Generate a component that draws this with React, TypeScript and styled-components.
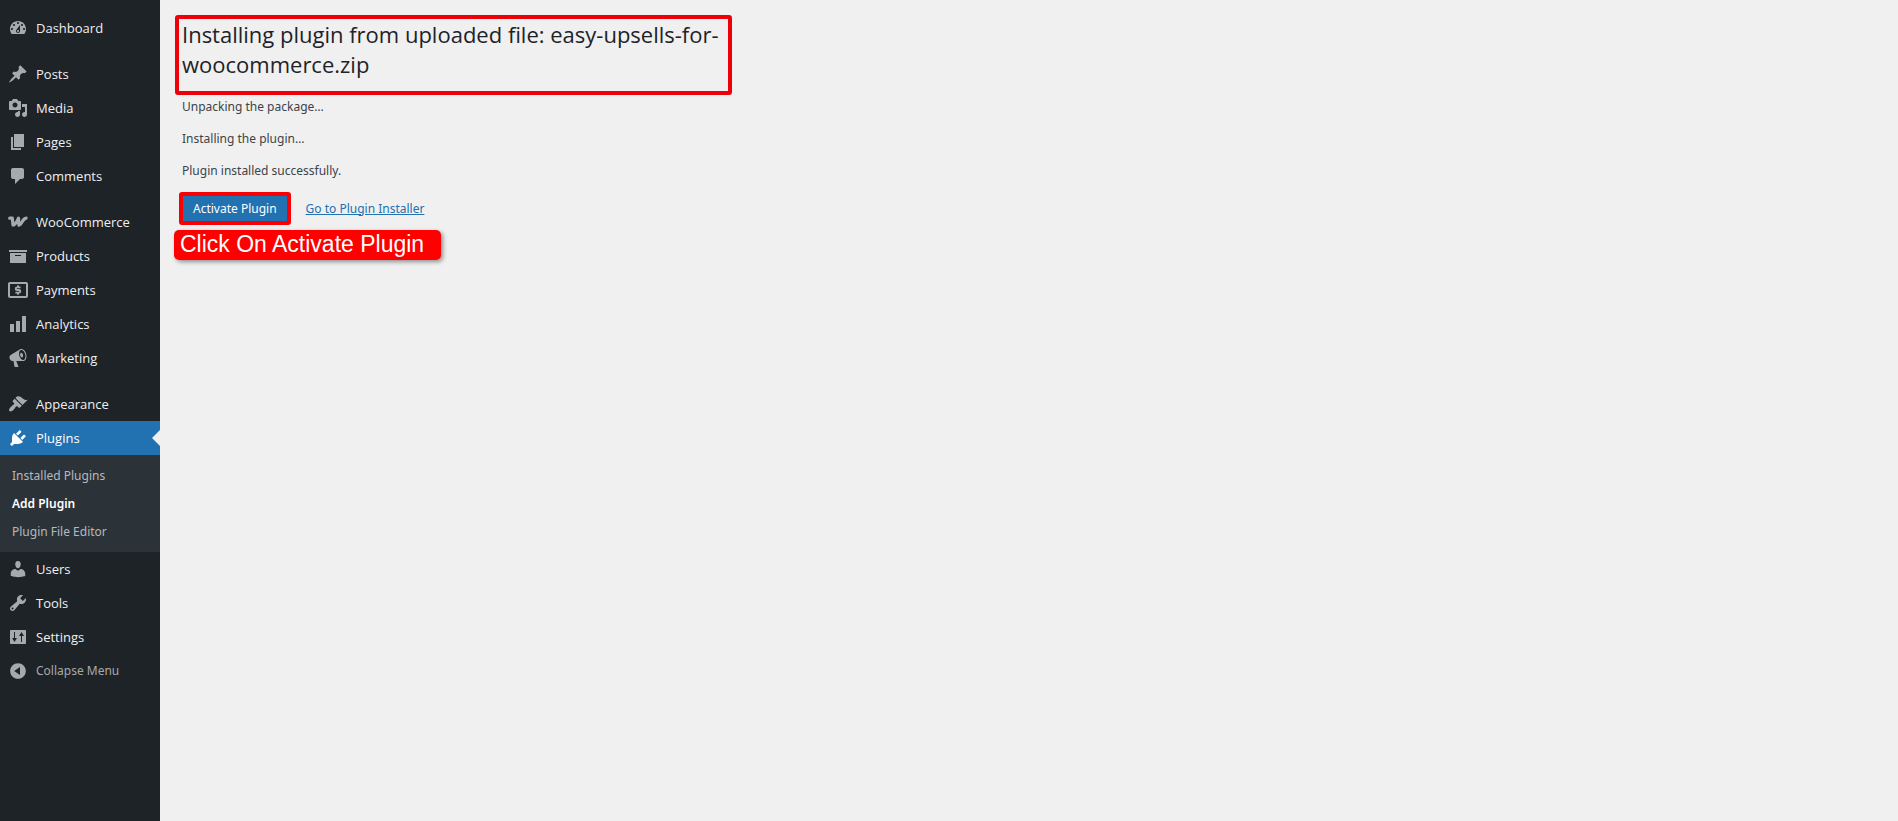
import React from "react";
import styled, { createGlobalStyle, css } from "styled-components";

const GlobalStyle = createGlobalStyle`
  *, *::before, *::after { box-sizing: border-box; }
  body {
    margin: 0;
    background: #f0f0f1;
    color: #3c434a;
    font-family: "Noto Sans", "Open Sans", sans-serif;
    font-size: 12px;
    line-height: 18px;
  }
`;

const Layout = styled.div`
  display: flex;
  align-items: stretch;
  min-height: 100vh;
`;

const Sidebar = styled.nav`
  flex: 0 0 160px;
  padding-top: 11px;
  background: #1d2327;
`;

const MenuList = styled.ul`
  margin: 0;
  padding: 0;
  list-style: none;
`;

const MenuItem = styled.li<{ $spaced?: boolean }>`
  margin-top: ${(p) => (p.$spaced ? "12px" : "0")};
`;

const rowStyle = css`
  position: relative;
  display: flex;
  align-items: center;
  width: 100%;
  height: 34px;
  padding: 0 0 0 8px;
  gap: 8px;
  border: 0;
  font: inherit;
  text-align: left;
  text-decoration: none;
  cursor: pointer;
`;

const MenuLink = styled.a<{ $current?: boolean }>`
  ${rowStyle}
  color: ${(p) => (p.$current ? "#fff" : "#f0f0f1")};
  background: ${(p) => (p.$current ? "#2271b1" : "transparent")};
  font-family: "Open Sans", "Noto Sans", sans-serif;
  font-size: 13px;

  svg {
    color: ${(p) => (p.$current ? "#fff" : "#a7aaad")};
  }

  &::after {
    content: "";
    display: ${(p) => (p.$current ? "block" : "none")};
    position: absolute;
    top: 9px;
    right: 0;
    border: 8px solid transparent;
    border-left-width: 0;
    border-right-color: #f0f0f1;
  }
`;

const CollapseButton = styled.button`
  ${rowStyle}
  background: transparent;
  color: #a7aaad;
`;

const Icon = styled.svg`
  flex: none;
  width: 20px;
  height: 20px;
  fill: currentColor;
`;

const SubMenu = styled.ul`
  margin: 0;
  padding: 7px 0 6px;
  list-style: none;
  background: #2c3338;
`;

const SubLink = styled.a<{ $current?: boolean }>`
  display: block;
  padding: 5px 12px;
  color: ${(p) => (p.$current ? "#fff" : "#b4b9be")};
  font-weight: ${(p) => (p.$current ? 600 : 400)};
  text-decoration: none;
`;

const Main = styled.main`
  flex: 1;
  min-width: 0;
  padding: 15px 14px;
`;

const Title = styled.h1`
  max-width: 557px;
  margin: 0 0 3px 1px;
  padding: 0 3px 12px;
  border: 4px solid #ee0008;
  border-radius: 3px;
  color: #1d2327;
  font-family: "Open Sans", "Noto Sans", sans-serif;
  font-size: 22px;
  font-weight: 400;
  line-height: 30px;
`;

const Message = styled.p`
  margin: 0 0 14px;
  padding-left: 8px;
`;

const Actions = styled.div`
  display: flex;
  align-items: center;
  gap: 15px;
  margin: -2px 0 5px 5px;
`;

const Activate = styled.button`
  height: 33px;
  padding: 0 10px;
  border: 4px solid #fa0005;
  border-radius: 3px;
  background: #2271b1;
  color: #fff;
  font: inherit;
  white-space: nowrap;
  cursor: pointer;
`;

const InstallerLink = styled.a`
  color: #2271b1;
`;

const Callout = styled.div`
  width: fit-content;
  padding: 0 17px 2px 6px;
  border-radius: 5px;
  background: #fe0000;
  box-shadow: 2px 2px 4px rgba(0, 0, 0, 0.4);
  color: #fff;
  font-family: "Liberation Sans", Arial, sans-serif;
  font-size: 23px;
  line-height: 28px;
`;

const paths: Record<string, string> = {
  dashboard:
    "M3.76 16h12.48C17.34 14.63 18 12.89 18 11c0-4.42-3.58-8-8-8s-8 3.58-8 8c0 1.89.66 3.63 1.76 5zM10 4c.55 0 1 .45 1 1s-.45 1-1 1-1-.45-1-1 .45-1 1-1zM6 6c.55 0 1 .45 1 1s-.45 1-1 1-1-.45-1-1 .45-1 1-1zm8 0c.55 0 1 .45 1 1s-.45 1-1 1-1-.45-1-1 .45-1 1-1zm-5.37 5.55L12 7v6c0 1.1-.9 2-2 2s-2-.9-2-2c0-.57.24-1.08.63-1.45zM4 10c.55 0 1 .45 1 1s-.45 1-1 1-1-.45-1-1 .45-1 1-1zm12 0c.55 0 1 .45 1 1s-.45 1-1 1-1-.45-1-1 .45-1 1-1zm-5 3c0-.55-.45-1-1-1s-1 .45-1 1 .45 1 1 1 1-.45 1-1z",
  posts:
    "M10.44 3.02l1.82-1.82 6.36 6.35-1.83 1.82c-1.05-.68-2.48-.57-3.41.36l-.75.75c-.92.93-1.04 2.35-.35 3.41l-1.83 1.82-2.41-2.41-2.8 2.79c-.42.42-3.38 2.71-3.8 2.29s1.86-3.39 2.28-3.81l2.79-2.79L4.1 9.36l1.83-1.82c1.05.69 2.48.57 3.4-.36l.75-.75c.93-.92 1.05-2.35.36-3.41z",
  media:
    "M13 11V4c0-.55-.45-1-1-1h-1.67L9 1H5L3.67 3H2c-.55 0-1 .45-1 1v7c0 .55.45 1 1 1h10c.55 0 1-.45 1-1zM7 4.5c1.38 0 2.5 1.12 2.5 2.5S8.38 9.5 7 9.5 4.5 8.38 4.5 7 5.62 4.5 7 4.5zM14 6h5v10.5c0 1.38-1.12 2.5-2.5 2.5S14 17.88 14 16.5s1.12-2.5 2.5-2.5c.17 0 .34.02.5.05V9h-3V6zm-4 8.05V13h2v3.5c0 1.38-1.12 2.5-2.5 2.5S7 17.88 7 16.5 8.12 14 9.5 14c.17 0 .34.02.5.05z",
  pages: "M6 15V2h10v13H6zm-1 1h8v2H3V5h2v11z",
  comments:
    "M5 2h9c1.1 0 2 .9 2 2v7c0 1.1-.9 2-2 2h-2l-5 5v-5H5c-1.1 0-2-.9-2-2V4c0-1.1.9-2 2-2z",
  products: "M19 4v2H1V4h18zM2 7h16v10H2V7zm11 3V9H7v1h6z",
  analytics: "M18 18V2h-4v16h4zm-6 0V7H8v11h4zm-6 0v-8H2v8h4z",
  marketing:
    "M18.15 5.94c.46 1.62.38 3.22-.02 4.48-.42 1.28-1.26 2.18-2.3 2.48-.16.06-.26.06-.4.06-.06.02-.12.02-.18.02-.06.02-.14.02-.22.02h-6.8l2.22 5.5c.02.14-.06.26-.14.34-.08.1-.24.16-.34.16H6.95c-.1 0-.26-.06-.34-.16-.08-.08-.16-.2-.14-.34l-1-5.5H4.25l-.02-.02c-.5.06-1.08-.18-1.54-.62s-.88-1.08-1.06-1.88c-.24-.8-.2-1.56-.02-2.2.18-.62.58-1.08 1.06-1.3l.02-.02 9-5.4c.1-.06.18-.1.24-.16.06-.04.14-.08.24-.12.16-.08.28-.12.5-.18 1.04-.3 2.24.1 3.22.98s1.84 2.24 2.26 3.86zm-2.58 5.98h-.02c.4-.1.74-.34 1.04-.7.58-.7.86-1.76.86-3.04 0-.64-.1-1.3-.28-1.98-.34-1.36-1.02-2.5-1.78-3.24s-1.68-1.1-2.46-.88c-.82.22-1.4.96-1.7 2-.32 1.04-.28 2.36.06 3.72.38 1.36 1 2.5 1.8 3.24.78.74 1.62 1.1 2.48.88zm-2.54-7.08c.22-.04.42-.02.62.04.38.16.76.48 1.02 1s.42 1.2.42 1.78c0 .3-.04.56-.12.8-.18.48-.44.84-.86.94-.34.1-.8-.06-1.14-.4s-.64-.86-.78-1.5c-.18-.62-.12-1.24.02-1.72s.48-.84.82-.94z",
  appearance:
    "M14.48 11.06L7.41 3.99l1.5-1.5c.5-.56 2.3-.47 3.51.32 1.21.8 1.43 1.28 2.91 2.1 1.18.64 2.45 1.26 4.45.85zm-.71.71L6.7 4.7 4.93 6.47c-.39.39-.39 1.02 0 1.41l1.06 1.06c.39.39.39 1.03 0 1.42-.6.6-1.43 1.11-2.21 1.69-.35.26-.7.53-1.01.84C1.43 14.23.4 16.08 1.4 17.07c.99 1 2.84-.03 4.18-1.36.31-.31.58-.66.85-1.02.57-.78 1.08-1.61 1.69-2.21.39-.39 1.02-.39 1.41 0l1.06 1.06c.39.39 1.02.39 1.41 0z",
  plugins:
    "M13.11 4.36L9.87 7.6 8 5.73l3.24-3.24c.35-.34 1.05-.2 1.56.32.52.51.66 1.21.31 1.55zm-8 1.77l.91-1.12 9.01 9.01-1.19.84c-.71.71-2.63 1.16-3.82 1.16H6.14L4.9 17.26c-.59.59-1.54.59-2.12 0-.59-.58-.59-1.53 0-2.12l1.24-1.24v-3.88c0-1.13.4-3.19 1.09-3.89zm7.26 3.97l3.24-3.24c.34-.35 1.04-.21 1.55.31.52.51.66 1.21.31 1.55l-3.24 3.25z",
  users:
    "M10 9.25c-2.27 0-2.73-3.44-2.73-3.44C7 4.02 7.82 2 9.97 2c2.16 0 2.98 2.02 2.71 3.81 0 0-.41 3.44-2.68 3.44zm0 2.57L12.72 10c2.39 0 4.52 2.33 4.52 4.53v2.49s-3.65 1.13-7.24 1.13c-3.65 0-7.24-1.13-7.24-1.13v-2.49c0-2.25 1.94-4.48 4.47-4.48z",
  tools:
    "M16.68 9.77c-1.34 1.34-3.3 1.67-4.95.99l-5.41 6.52c-.99.99-2.59.99-3.58 0s-.99-2.59 0-3.57l6.52-5.42c-.68-1.65-.35-3.61.99-4.95 1.28-1.28 3.12-1.62 4.72-1.06l-2.89 2.89 2.82 2.82 2.86-2.87c.53 1.58.18 3.39-1.08 4.65zM3.81 16.21c.4.39 1.04.39 1.43 0 .4-.4.4-1.04 0-1.43-.39-.4-1.03-.4-1.43 0-.39.39-.39 1.03 0 1.43z",
  settings:
    "M3 3h14c.55 0 1 .45 1 1v12c0 .55-.45 1-1 1H3c-.55 0-1-.45-1-1V4c0-.55.45-1 1-1zM6 5v6H4l2.5 4L9 11H7V5zM13 15h1V9h2l-2.5-4L11 9h2z",
  collapse:
    "M10 2.16c4.33 0 7.84 3.51 7.84 7.84s-3.51 7.84-7.84 7.84S2.16 14.33 2.16 10 5.71 2.16 10 2.16zm2 11.72V6.12L6.18 9.97z",
};

function MenuIcon({ name }: { name: string }) {
  if (name === "woocommerce") {
    return (
      <Icon viewBox="0 0 20 20" aria-hidden="true">
        <path
          fill="none"
          stroke="currentColor"
          strokeWidth="3.2"
          strokeLinecap="round"
          strokeLinejoin="round"
          d="M1.7 6.2h2.6L5 13.2c2 0 3.9-3.400 5.500-7L10.900 13.200c2.500 0 3.600-6.600 7.200-7"
        />
      </Icon>
    );
  }
  if (name === "payments") {
    return (
      <Icon viewBox="0 0 20 20" aria-hidden="true">
        <g fill="none" stroke="currentColor">
          <rect x="1" y="3" width="18" height="14" rx="1" strokeWidth="2" />
          <path
            strokeWidth="1.8"
            d="M12.6 7.4H9.100c-1.900 0-1.900 2.600 0 2.600h1.800c1.900 0 1.900 2.600 0 2.600H7.400M10 5.200v2M10 12.800v2"
          />
        </g>
      </Icon>
    );
  }
  return (
    <Icon viewBox="0 0 20 20" aria-hidden="true">
      <path fillRule="evenodd" d={paths[name]} />
    </Icon>
  );
}

interface Entry {
  icon: string;
  label: string;
  spaced?: boolean;
  current?: boolean;
  children?: { label: string; current?: boolean }[];
}

const entries: Entry[] = [
  { icon: "dashboard", label: "Dashboard" },
  { icon: "posts", label: "Posts", spaced: true },
  { icon: "media", label: "Media" },
  { icon: "pages", label: "Pages" },
  { icon: "comments", label: "Comments" },
  { icon: "woocommerce", label: "WooCommerce", spaced: true },
  { icon: "products", label: "Products" },
  { icon: "payments", label: "Payments" },
  { icon: "analytics", label: "Analytics" },
  { icon: "marketing", label: "Marketing" },
  { icon: "appearance", label: "Appearance", spaced: true },
  {
    icon: "plugins",
    label: "Plugins",
    current: true,
    children: [
      { label: "Installed Plugins" },
      { label: "Add Plugin", current: true },
      { label: "Plugin File Editor" },
    ],
  },
  { icon: "users", label: "Users" },
  { icon: "tools", label: "Tools" },
  { icon: "settings", label: "Settings" },
];

export default function App() {
  return (
    <>
      <GlobalStyle />
      <Layout>
        <Sidebar aria-label="Main menu">
          <MenuList>
            {entries.map((entry) => (
              <MenuItem key={entry.label} $spaced={entry.spaced}>
                <MenuLink href="#" $current={entry.current}>
                  <MenuIcon name={entry.icon} />
                  <span>{entry.label}</span>
                </MenuLink>
                {entry.children && (
                  <SubMenu>
                    {entry.children.map((child) => (
                      <li key={child.label}>
                        <SubLink href="#" $current={child.current}>
                          {child.label}
                        </SubLink>
                      </li>
                    ))}
                  </SubMenu>
                )}
              </MenuItem>
            ))}
            <MenuItem>
              <CollapseButton type="button">
                <MenuIcon name="collapse" />
                <span>Collapse Menu</span>
              </CollapseButton>
            </MenuItem>
          </MenuList>
        </Sidebar>
        <Main>
          <Title>Installing plugin from uploaded file: easy-upsells-for-woocommerce.zip</Title>
          <Message>Unpacking the package…</Message>
          <Message>Installing the plugin…</Message>
          <Message>Plugin installed successfully.</Message>
          <Actions>
            <Activate type="button">Activate Plugin</Activate>
            <InstallerLink href="#">Go to Plugin Installer</InstallerLink>
          </Actions>
          <Callout>Click On Activate Plugin</Callout>
        </Main>
      </Layout>
    </>
  );
}
